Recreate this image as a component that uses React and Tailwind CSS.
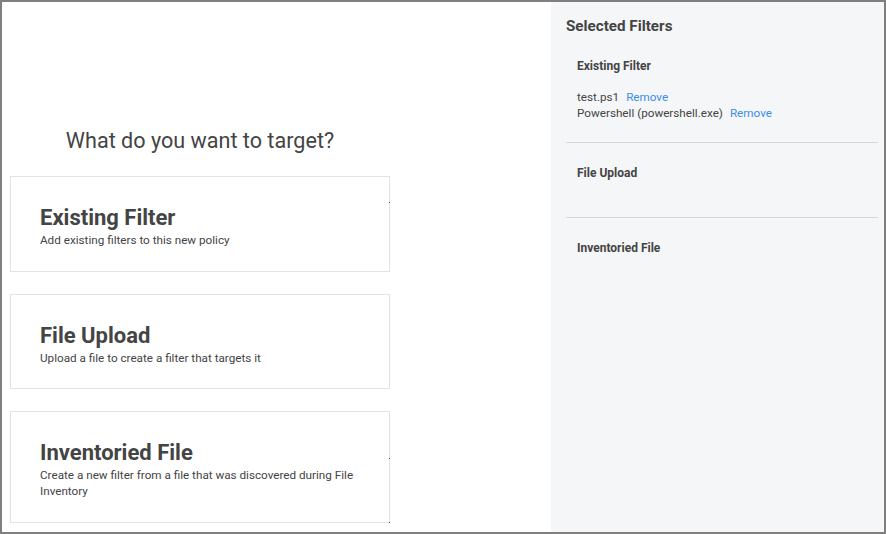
const options = [
  {
    title: 'Existing Filter',
    text: 'Add existing filters to this new policy',
    dots: ['top-[25px]'],
  },
  {
    title: 'File Upload',
    text: 'Upload a file to create a filter that targets it',
    dots: [],
  },
  {
    title: 'Inventoried File',
    text: 'Create a new filter from a file that was discovered during File Inventory',
    dots: ['top-[46px]', 'bottom-[-1px]'],
  },
];

const selected = [
  {
    name: 'Existing Filter',
    items: ['test.ps1', 'Powershell (powershell.exe)'],
  },
  { name: 'File Upload', items: [] },
  { name: 'Inventoried File', items: [] },
];

function OptionCard({ option }) {
  return (
    <div className="relative w-[380px] border border-[#e3e3e3] bg-white pt-[27px] pb-[22.5px] pl-[29px] pr-[29px] cursor-pointer">
      <h3 className="text-[22px] leading-[28px] font-bold text-[#444]">{option.title}</h3>
      <p className="text-[11.7px] leading-[16px] text-[#444]">{option.text}</p>
      {option.dots.map((d) => (
        <span key={d} className={`absolute right-[-1px] w-px h-px bg-[#555] ${d}`} />
      ))}
    </div>
  );
}

function FilterSection({ section, last }) {
  return (
    <div className={`px-[11px] pt-[22px] ${last ? '' : 'pb-[21px] border-b border-[#d6d6d6]'}`}>
      <h4 className="text-[12px] leading-[16px] font-bold text-[#444]">{section.name}</h4>
      <ul className="mt-[15px]">
        {section.items.map((item) => (
          <li key={item} className="text-[11.7px] leading-[16px] text-[#444]">
            {item}
            <button className="ml-[7px] text-[#3a8ee6] hover:underline">Remove</button>
          </li>
        ))}
      </ul>
    </div>
  );
}

export default function App() {
  return (
    <div
      className="w-[886px] h-[534px] border-2 border-[#7f7f7f] bg-white flex overflow-hidden"
      style={{ fontFamily: 'Roboto, "Liberation Sans", sans-serif' }}
    >
      <div className="w-[549px] shrink-0 pl-[8px] pt-[125px]">
        <h2 className="w-[380px] text-center text-[21.6px] leading-[28px] text-[#444] mb-[21px]">
          What do you want to target?
        </h2>
        <div className="flex flex-col gap-[22px]">
          {options.map((o) => (
            <OptionCard key={o.title} option={o} />
          ))}
        </div>
      </div>

      <div className="flex-1 bg-[#f5f6f8] pl-[15px] pr-[6px] pt-[15px]">
        <h3 className="text-[15.2px] leading-[19px] font-bold text-[#444]">Selected Filters</h3>
        {selected.map((s, i) => (
          <FilterSection key={s.name} section={s} last={i === selected.length - 1} />
        ))}
      </div>
    </div>
  );
}
